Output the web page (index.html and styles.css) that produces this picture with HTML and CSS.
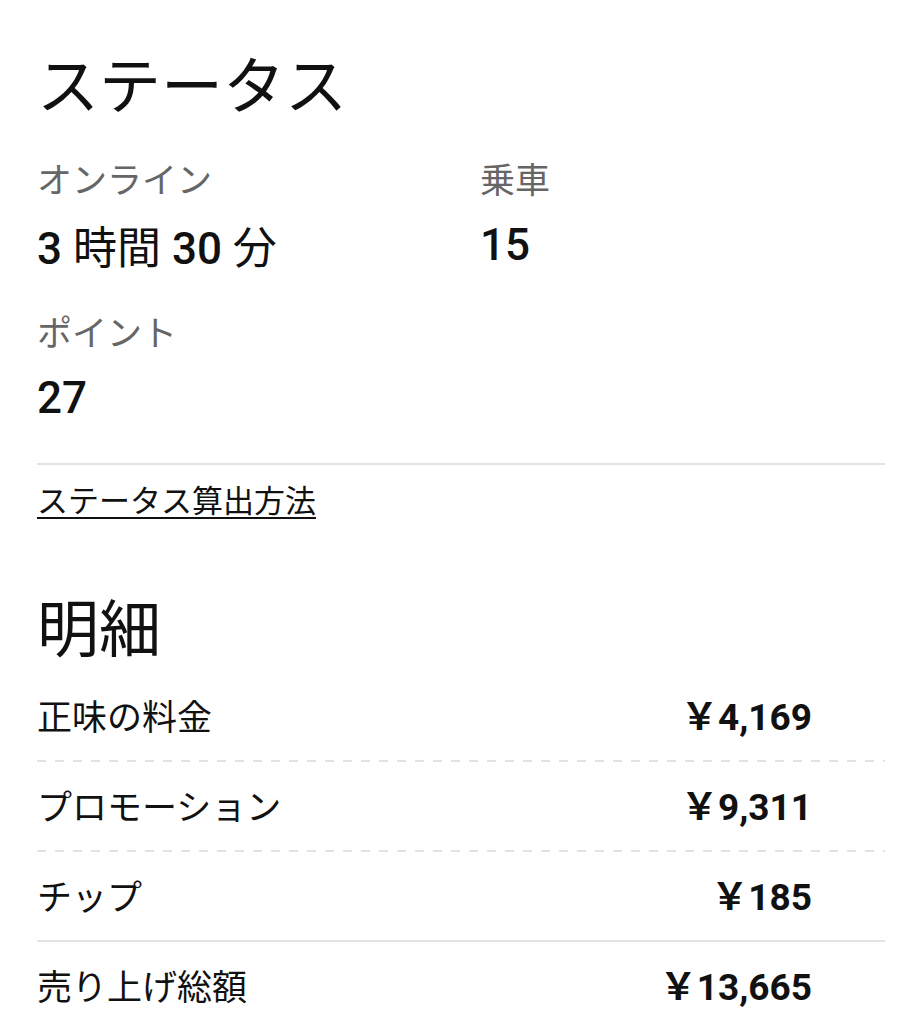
FILE: index.html
```html
<!DOCTYPE html>
<html lang="ja">
<head>
    <meta charset="UTF-8">
    <meta name="viewport" content="width=device-width, initial-scale=1.0">
    <title>ステータス</title>
    <link rel="stylesheet" href="styles.css">
</head>
<body>
    <div class="page">
        <section class="status-section">
            <h1 class="page-title">ステータス</h1>
            <div class="stat-grid">
                <div class="stat-item">
                    <div class="stat-label">オンライン</div>
                    <div class="stat-value">3 <span class="unit">時間</span> 30 <span class="unit">分</span></div>
                </div>
                <div class="stat-item">
                    <div class="stat-label">乗車</div>
                    <div class="stat-value">15</div>
                </div>
                <div class="stat-item">
                    <div class="stat-label">ポイント</div>
                    <div class="stat-value">27</div>
                </div>
            </div>
            <div class="status-footer">
                <a href="#" class="status-link">ステータス算出方法</a>
            </div>
        </section>

        <section class="detail-section">
            <h1 class="page-title">明細</h1>
            <ul class="detail-list">
                <li class="detail-row">
                    <span class="detail-name">正味の料金</span>
                    <span class="detail-amount">￥4,169</span>
                </li>
                <li class="detail-row">
                    <span class="detail-name">プロモーション</span>
                    <span class="detail-amount">￥9,311</span>
                </li>
                <li class="detail-row sub-total">
                    <span class="detail-name">チップ</span>
                    <span class="detail-amount">￥185</span>
                </li>
                <li class="detail-row total">
                    <span class="detail-name">売り上げ総額</span>
                    <span class="detail-amount">￥13,665</span>
                </li>
            </ul>
        </section>
    </div>
</body>
</html>
```

FILE: styles.css
```css
* {
    margin: 0;
    padding: 0;
    box-sizing: border-box;
    font-family: 'Noto Sans CJK JP', 'Noto Sans', sans-serif;
}

body {
    background-color: #ffffff;
    color: #111111;
}

.page {
    padding: 0 36px 0 37px;
}

.page-title {
    font-size: 62px;
    font-weight: 400;
    line-height: 1;
    color: #111111;
}

.status-section .page-title {
    padding-top: 51px;
}

.stat-grid {
    display: grid;
    grid-template-columns: 443px 1fr;
    row-gap: 42px;
    padding-top: 47px;
    padding-bottom: 43px;
    border-bottom: 2px solid #e2e2e2;
}

.stat-label {
    font-size: 35px;
    line-height: 1;
    color: #666666;
}

.stat-value {
    font-family: 'Roboto', 'Noto Sans CJK JP', sans-serif;
    font-size: 44px;
    font-weight: 500;
    line-height: 1;
    margin-top: 28px;
    color: #111111;
}

.stat-value .unit {
    font-weight: 400;
}

.status-footer {
    padding-top: 18px;
    font-size: 31px;
    line-height: 1;
}

.status-link {
    font-size: 31px;
    color: #111111;
    text-decoration: underline;
    text-underline-offset: 5px;
    text-decoration-thickness: 2px;
}

.detail-section {
    padding-top: 80px;
}

.detail-list {
    list-style-type: none;
    padding-top: 16px;
}

.detail-row {
    display: flex;
    align-items: center;
    justify-content: space-between;
    height: 90px;
    padding-right: 73px;
    padding-bottom: 6px;
    background-image: linear-gradient(to right, #e2e2e2 50%, transparent 50%);
    background-size: 18px 2px;
    background-repeat: repeat-x;
    background-position: left bottom;
}

.detail-row.sub-total {
    background-image: linear-gradient(#e2e2e2, #e2e2e2);
    background-size: 100% 2px;
}

.detail-row.total {
    background-image: none;
}

.detail-name {
    font-size: 35px;
    color: #111111;
}

.detail-amount {
    font-family: 'Roboto', 'Noto Sans CJK JP', sans-serif;
    font-size: 37px;
    font-weight: 700;
    color: #111111;
}
```
